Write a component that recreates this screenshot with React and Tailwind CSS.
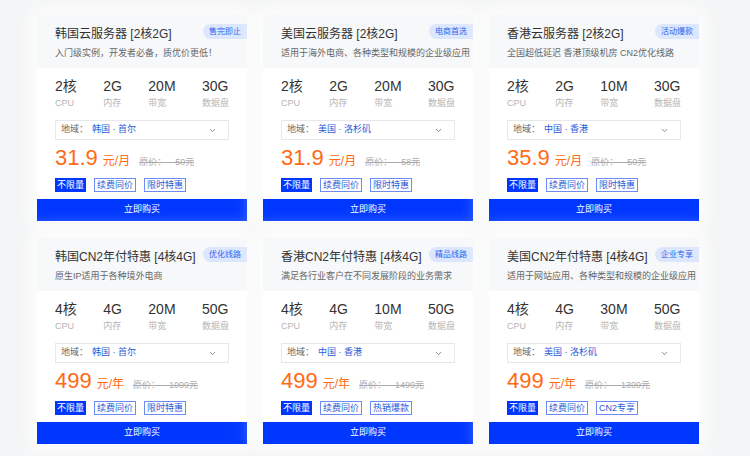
import { ChevronDown } from 'lucide-react';

const plans = [
  { title: '韩国云服务器 [2核2G]', badge: '售完即止', sub: '入门级实例，开发者必备，质优价更低！', specs: ['2核', '2G', '20M', '30G'], region: '韩国 · 首尔', price: '31.9', unit: '元/月', old: '原价：—50元', tag: '限时特惠' },
  { title: '美国云服务器 [2核2G]', badge: '电商首选', sub: '适用于海外电商、各种类型和规模的企业级应用', specs: ['2核', '2G', '20M', '30G'], region: '美国 · 洛杉矶', price: '31.9', unit: '元/月', old: '原价：—58元', tag: '限时特惠' },
  { title: '香港云服务器 [2核2G]', badge: '活动爆款', sub: '全国超低延迟 香港顶级机房 CN2优化线路', specs: ['2核', '2G', '10M', '30G'], region: '中国 · 香港', price: '35.9', unit: '元/月', old: '原价：—50元', tag: '限时特惠' },
  { title: '韩国CN2年付特惠 [4核4G]', badge: '优化线路', sub: '原生IP适用于各种境外电商', specs: ['4核', '4G', '20M', '50G'], region: '韩国 · 首尔', price: '499', unit: '元/年', old: '原价：—1099元', tag: '限时特惠' },
  { title: '香港CN2年付特惠 [4核4G]', badge: '精品线路', sub: '满足各行业客户在不同发展阶段的业务需求', specs: ['4核', '4G', '10M', '50G'], region: '中国 · 香港', price: '499', unit: '元/年', old: '原价：—1499元', tag: '热销爆款' },
  { title: '美国CN2年付特惠 [4核4G]', badge: '企业专享', sub: '适用于网站应用、各种类型和规模的企业级应用', specs: ['4核', '4G', '30M', '50G'], region: '美国 · 洛杉矶', price: '499', unit: '元/年', old: '原价：—1399元', tag: 'CN2专享' },
];

const labels = ['CPU', '内存', '带宽', '数据盘'];

function PlanCard({ p }) {
  return (
    <div className="relative w-[210px] bg-white overflow-hidden shadow-[0_0_18px_6px_rgba(255,255,255,0.9)]">
      <div className="bg-[#f7f8fa] px-[18px] pt-[10px] pb-[9px]">
        <div className="text-[12px] leading-[18px] text-[#333] whitespace-nowrap">{p.title}</div>
        <div className="mt-[4px] text-[9px] leading-[12px] text-[#666] whitespace-nowrap">{p.sub}</div>
      </div>
      <span className="absolute right-0 top-[9px] h-[15px] px-[6px] rounded-l-full bg-[#dce7fd] text-[8px] leading-[15px] text-[#2f63f0]">{p.badge}</span>
      <div className="px-[18px] pt-[9px]">
        <div className="flex justify-between">
          {p.specs.map((s, i) => (
            <div key={i} className="flex flex-col">
              <span className="text-[14px] leading-[18px] text-[#333]">{s}</span>
              <span className="mt-[2px] text-[9px] leading-[12px] text-[#b5b5b5]">{labels[i]}</span>
            </div>
          ))}
        </div>
        <div className="mt-[11px] h-[20px] border border-[#e8e8e8] flex items-center px-[5px] text-[9px]">
          <span className="text-[#666]">地域：</span>
          <span className="ml-[4px] text-[#2a5bd7]">{p.region}</span>
          <ChevronDown className="ml-auto mr-[6px] w-[9px] h-[9px] text-[#666]" strokeWidth={2} />
        </div>
        <div className="mt-[4px] flex items-baseline h-[28px]">
          <span className="text-[22px] leading-[28px] text-[#ff6a14]">{p.price}</span>
          <span className="ml-[5px] text-[12px] text-[#ff6a14]">{p.unit}</span>
          <span className="ml-[9px] text-[9px] text-[#aaa] line-through">{p.old}</span>
        </div>
        <div className="mt-[6px] flex gap-[8px] text-[9px] leading-[12px]">
          <span className="px-[1px] bg-[#0037ff] border border-[#0037ff] text-white">不限量</span>
          <span className="px-[2px] border border-[#6b8cf5] text-[#2a5bd7]">续费同价</span>
          <span className="px-[2px] border border-[#6b8cf5] text-[#2a5bd7]">{p.tag}</span>
        </div>
      </div>
      <div className="mt-[7px] h-[22px] bg-[#0037ff] text-white text-[9px] flex items-center justify-center">立即购买</div>
    </div>
  );
}

export default function App() {
  return (
    <div className="w-[750px] h-[456px] bg-[#f4f5f6] font-['Liberation_Sans','Noto_Sans_CJK_SC',sans-serif] pl-[37px] pt-[15px] overflow-hidden">
      <div className="grid grid-cols-[210px_210px_210px] gap-x-[16px] gap-y-[17px]">
        {plans.map((p, i) => <PlanCard key={i} p={p} />)}
      </div>
    </div>
  );
}
